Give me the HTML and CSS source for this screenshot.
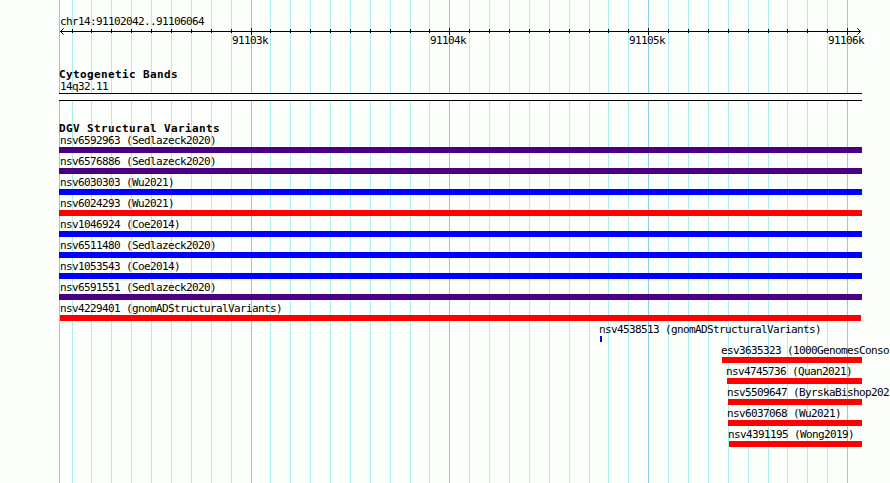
FILE: index.html
```html
<!DOCTYPE html>
<html lang="en">
<head>
<meta charset="utf-8">
<title>chr14:91102042..91106064</title>
<link rel="stylesheet" href="styles.css">
</head>
<body>
<main class="browser">
  <svg class="grid" width="890" height="483" aria-hidden="true">
    <path class="minor" d="M72.5 0V483M91.5 0V483M111.5 0V483M131.5 0V483M151.5 0V483M171.5 0V483M191.5 0V483M211.5 0V483M231.5 0V483M270.5 0V483M290.5 0V483M310.5 0V483M330.5 0V483M350.5 0V483M370.5 0V483M390.5 0V483M410.5 0V483M429.5 0V483M469.5 0V483M489.5 0V483M509.5 0V483M529.5 0V483M549.5 0V483M569.5 0V483M589.5 0V483M608.5 0V483M628.5 0V483M668.5 0V483M688.5 0V483M708.5 0V483M728.5 0V483M748.5 0V483M768.5 0V483M787.5 0V483M807.5 0V483M827.5 0V483"/>
    <path class="major" d="M59.5 0V483M251.5 0V483M449.5 0V483M648.5 0V483M847.5 0V483"/>
  </svg>
  <header class="region">chr14:91102042..91106064</header>
  <svg class="ruler" width="890" height="8" aria-hidden="true">
    <path d="M60 3.5H861M72.5 1V5M91.5 1V5M111.5 1V5M131.5 1V5M151.5 1V5M171.5 1V5M191.5 1V5M211.5 1V5M231.5 1V5M270.5 1V5M290.5 1V5M310.5 1V5M330.5 1V5M350.5 1V5M370.5 1V5M390.5 1V5M410.5 1V5M429.5 1V5M469.5 1V5M489.5 1V5M509.5 1V5M529.5 1V5M549.5 1V5M569.5 1V5M589.5 1V5M608.5 1V5M628.5 1V5M668.5 1V5M688.5 1V5M708.5 1V5M728.5 1V5M748.5 1V5M768.5 1V5M787.5 1V5M807.5 1V5M827.5 1V5M251.5 0V7M449.5 0V7M648.5 0V7M847.5 0V7"/>
    <path class="arrow" d="M63.7 .3L60.5 3.5L63.7 6.7M857.3 .3L860.5 3.5L857.3 6.7"/>
  </svg>
  <div class="scale"><span>91103k</span><span>91104k</span><span>91105k</span><span>91106k</span></div>
  <section class="track bands">
    <h2>Cytogenetic Bands</h2>
    <div class="label">14q32.11</div>
    <div class="band"></div>
  </section>
  <section class="track variants">
    <h2>DGV Structural Variants</h2>
    <div class="row"><div class="label">nsv6592963 (Sedlazeck2020)</div><div class="bar complex"></div></div>
    <div class="row"><div class="label">nsv6576886 (Sedlazeck2020)</div><div class="bar complex"></div></div>
    <div class="row"><div class="label">nsv6030303 (Wu2021)</div><div class="bar gain"></div></div>
    <div class="row"><div class="label">nsv6024293 (Wu2021)</div><div class="bar loss"></div></div>
    <div class="row"><div class="label">nsv1046924 (Coe2014)</div><div class="bar gain"></div></div>
    <div class="row"><div class="label">nsv6511480 (Sedlazeck2020)</div><div class="bar gain"></div></div>
    <div class="row"><div class="label">nsv1053543 (Coe2014)</div><div class="bar gain"></div></div>
    <div class="row"><div class="label">nsv6591551 (Sedlazeck2020)</div><div class="bar complex"></div></div>
    <div class="row"><div class="label">nsv4229401 (gnomADStructuralVariants)</div><div class="bar loss" style="margin-left:1px;width:801px"></div></div>
    <div class="row inner" style="margin-left:541px"><div class="label">nsv4538513 (gnomADStructuralVariants)</div><div class="bar gain" style="width:2px"></div></div>
    <div class="row inner" style="margin-left:663px"><div class="label">esv3635323 (1000GenomesConso</div><div class="bar loss"></div></div>
    <div class="row inner" style="margin-left:668px"><div class="label">nsv4745736 (Quan2021)</div><div class="bar loss"></div></div>
    <div class="row inner" style="margin-left:669px"><div class="label">nsv5509647 (ByrskaBishop202</div><div class="bar loss"></div></div>
    <div class="row inner" style="margin-left:669px"><div class="label">nsv6037068 (Wu2021)</div><div class="bar loss"></div></div>
    <div class="row inner" style="margin-left:670px"><div class="label">nsv4391195 (Wong2019)</div><div class="bar loss"></div></div>
  </section>
</main>
</body>
</html>
```
FILE: styles.css
```css
body {
  margin: 0;
  background: #fcfefc;
}

.browser {
  position: relative;
  z-index: 0;
  width: 890px;
  height: 483px;
  overflow: hidden;
  color: #000;
  font: 11px/13px "DejaVu Sans Mono", monospace;
  letter-spacing: -0.622px;
  display: flex;
  flex-direction: column;
}

.grid {
  position: absolute;
  inset: 0;
  z-index: -1;
}

.grid path,
.ruler path {
  fill: none;
  stroke-width: 1;
  shape-rendering: crispEdges;
}

.grid .minor { stroke: #afeeee; }
.grid .major { stroke: #87ceeb; }

.region {
  padding: 15px 0 0 60px;
}

.ruler { display: block; flex: none; }
.ruler path { stroke: #000; }
.ruler .arrow { shape-rendering: auto; }

.scale {
  display: grid;
  grid-template-columns: 198px 199px 199px 62px;
  margin: -2px 0 0 232px;
}

.track {
  margin-left: 59px;
  width: 803px;
}

.track h2 {
  margin: 0;
  height: 12px;
  font-size: 11px;
  line-height: 13px;
  font-weight: bold;
  letter-spacing: 0.378px;
  white-space: nowrap;
}

.bands,
.variants { padding-top: 21px; }

.label {
  height: 13px;
  padding-left: 1px;
  white-space: nowrap;
}

.band {
  box-sizing: border-box;
  height: 8px;
  border: solid #000;
  border-width: 1px 0;
  background: #fcfefc;
}

.row {
  height: 19px;
  margin-bottom: 2px;
}

.row.inner .label {
  padding-left: 0;
  margin-left: -1px;
}

.bar { height: 6px; }
.complex { background: #4b0082; }
.gain { background: #00f; }
.loss { background: #f00; }
```
